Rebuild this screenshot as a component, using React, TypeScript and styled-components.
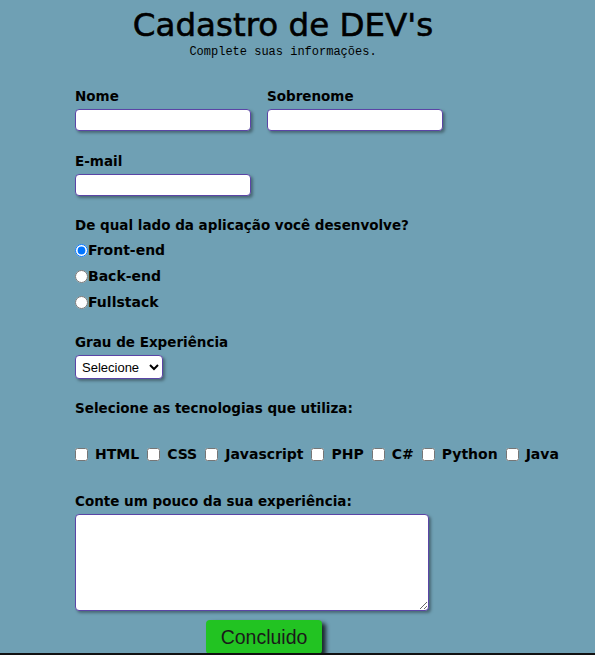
import React from "react";
import styled, { createGlobalStyle } from "styled-components";

const GlobalStyle = createGlobalStyle`
  html, body {
    margin: 0;
    padding: 0;
    background: #6fa0b4;
  }
  body {
    font-family: "Comic Sans MS", "DejaVu Sans", sans-serif;
    color: #000;
  }
`;

const Page = styled.div`
  height: 653px;
  border-bottom: 2px solid #111;
  overflow: hidden;
`;

const Header = styled.header`
  width: 566px;
  display: flex;
  flex-direction: column;
  align-items: center;
  padding-top: 6px;
`;

const Title = styled.h1`
  margin: 0;
  font-size: 32.5px;
  font-weight: normal;
  line-height: 38px;
  -webkit-text-stroke: 0.6px #000;
`;

const Subtitle = styled.p`
  margin: 1px 0 0;
  font-family: "Liberation Mono", monospace;
  font-size: 12px;
  line-height: 14px;
`;

const Form = styled.form`
  padding: 28px 0 0 75px;
  display: flex;
  flex-direction: column;
`;

const Row = styled.div`
  display: flex;
  gap: 16px;
`;

const Field = styled.div<{ $mb?: number }>`
  display: flex;
  flex-direction: column;
  margin-bottom: ${({ $mb }) => $mb ?? 22}px;
`;

const Label = styled.label`
  font-weight: bold;
  font-size: 13.5px;
  line-height: 18px;
  margin-bottom: 4px;
`;

const Input = styled.input`
  box-sizing: border-box;
  width: 176px;
  height: 22px;
  border: 1.5px solid #5b45a6;
  border-radius: 4px;
  background: #fff;
  box-shadow: 2px 2px 3px rgba(0, 0, 0, 0.35);
  padding: 0 4px;
`;

const RadioList = styled.div`
  display: flex;
  flex-direction: column;
  gap: 7px;
  margin-top: 3px;
`;

const RadioOption = styled.label`
  display: flex;
  align-items: center;
  font-weight: bold;
  font-size: 14px;
  line-height: 19px;
  input {
    margin: 0;
    width: 13px;
    height: 13px;
  }
`;

const Select = styled.select`
  width: 88px;
  height: 24px;
  border: 1.5px solid #5b45a6;
  border-radius: 4px;
  background: #fff;
  box-shadow: 2px 2px 3px rgba(0, 0, 0, 0.35);
  font-family: "Liberation Sans", Arial, sans-serif;
  font-size: 13px;
  color: #000;
  padding: 0 2px;
`;

const Checks = styled.div`
  display: flex;
  align-items: center;
  gap: 8px;
  margin: 24px 0 29px;
`;

const CheckOption = styled.label`
  display: flex;
  align-items: center;
  gap: 7px;
  font-weight: bold;
  font-size: 14px;
  line-height: 18px;
  input {
    margin: 0;
    width: 13px;
    height: 13px;
  }
`;

const TextArea = styled.textarea`
  box-sizing: border-box;
  width: 354px;
  height: 97px;
  border: 1.5px solid #5b45a6;
  border-radius: 4px;
  background: #fff;
  box-shadow: 2px 2px 3px rgba(0, 0, 0, 0.35);
  margin-top: 0;
`;

const ButtonRow = styled.div`
  display: flex;
  padding-left: 131px;
  margin-top: 9px;
`;

const Button = styled.button`
  width: 116px;
  height: 34px;
  border: none;
  border-radius: 4px;
  background: #22c322;
  color: #1a1a1a;
  font-family: "Liberation Sans", Arial, sans-serif;
  font-size: 19.5px;
  padding: 0;
  box-shadow: 4px 3px 4px rgba(0, 0, 0, 0.75);
  cursor: pointer;
`;

const techs = ["HTML", "CSS", "Javascript", "PHP", "C#", "Python", "Java"];

export default function App() {
  return (
    <Page>
      <GlobalStyle />
      <Header>
        <Title>Cadastro de DEV's</Title>
        <Subtitle>Complete suas informações.</Subtitle>
      </Header>
      <Form onSubmit={(e) => e.preventDefault()}>
        <Row>
          <Field $mb={21}>
            <Label htmlFor="nome">Nome</Label>
            <Input id="nome" type="text" />
          </Field>
          <Field $mb={21}>
            <Label htmlFor="sobrenome">Sobrenome</Label>
            <Input id="sobrenome" type="text" />
          </Field>
        </Row>
        <Field $mb={20}>
          <Label htmlFor="email">E-mail</Label>
          <Input id="email" type="email" />
        </Field>
        <Field $mb={21}>
          <Label>De qual lado da aplicação você desenvolve?</Label>
          <RadioList>
            <RadioOption>
              <input type="radio" name="lado" defaultChecked />
              Front-end
            </RadioOption>
            <RadioOption>
              <input type="radio" name="lado" />
              Back-end
            </RadioOption>
            <RadioOption>
              <input type="radio" name="lado" />
              Fullstack
            </RadioOption>
          </RadioList>
        </Field>
        <Field $mb={20}>
          <Label htmlFor="grau">Grau de Experiência</Label>
          <Select id="grau" defaultValue="">
            <option value="">Selecione</option>
            <option value="junior">Júnior</option>
            <option value="pleno">Pleno</option>
            <option value="senior">Sênior</option>
          </Select>
        </Field>
        <Label>Selecione as tecnologias que utiliza:</Label>
        <Checks>
          {techs.map((t) => (
            <CheckOption key={t}>
              <input type="checkbox" />
              {t}
            </CheckOption>
          ))}
        </Checks>
        <Label htmlFor="exp">Conte um pouco da sua experiência:</Label>
        <TextArea id="exp" />
        <ButtonRow>
          <Button type="submit">Concluido</Button>
        </ButtonRow>
      </Form>
    </Page>
  );
}
